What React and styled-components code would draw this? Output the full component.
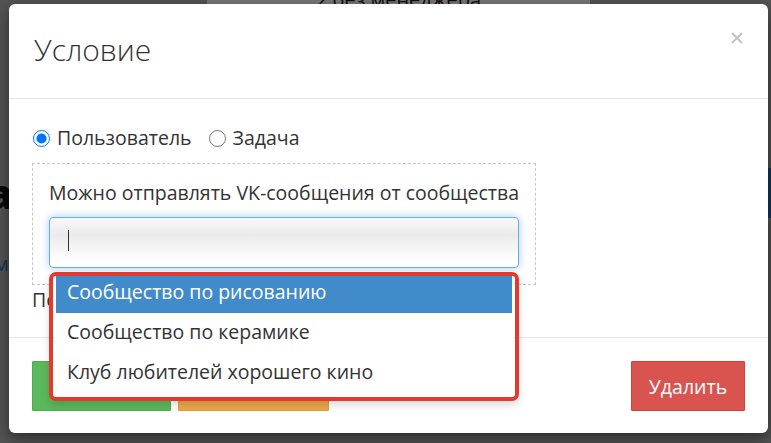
import React from "react";
import styled, { createGlobalStyle } from "styled-components";

const GlobalStyle = createGlobalStyle`
  html, body {
    margin: 0;
    padding: 0;
  }
  body {
    width: 771px;
    height: 443px;
    overflow: hidden;
    font-family: "Open Sans", "Liberation Sans", sans-serif;
    color: #333;
    background: #a8a8a8;
  }
`;

const Page = styled.div`
  position: relative;
  width: 771px;
  height: 443px;
  overflow: hidden;
`;

const PageContent = styled.div`
  display: grid;
  grid-template-columns: 207px 383px 1fr;
  align-items: start;
  height: 100%;
`;

const SideColumn = styled.div`
  position: relative;
  height: 100%;
`;

const CenterCard = styled.div`
  background: #f2f2f2;
  text-align: center;
  font-size: 20px;
  line-height: 20px;
  height: 60px;
  margin-top: -10px;
  color: #222;
`;

const BigLetter = styled.span`
  position: absolute;
  left: -12px;
  top: 166px;
  font-size: 40px;
  font-weight: 800;
  color: #111;
`;

const SmallLink = styled.span`
  position: absolute;
  left: -6px;
  top: 250px;
  font-size: 20px;
  color: #2a6ab0;
`;

const NavyBlock = styled.div`
  position: absolute;
  right: 0;
  top: 168px;
  width: 40px;
  height: 50px;
  background: #2f6fb5;
`;

const Backdrop = styled.div`
  position: absolute;
  inset: 0;
  background: rgba(0, 0, 0, 0.5);
`;

const Modal = styled.div`
  position: absolute;
  left: 9px;
  top: 4px;
  width: 759px;
  background: #fff;
  border-radius: 6px;
  box-shadow: 0 5px 15px rgba(0, 0, 0, 0.5);
  display: flex;
  flex-direction: column;
`;

const Header = styled.div`
  flex-shrink: 0;
  height: 94px;
  padding: 0 25px 0 25px;
  border-bottom: 1px solid #e5e5e5;
  display: flex;
  justify-content: space-between;
  align-items: center;
`;

const Title = styled.h4`
  margin: -4px 0 0;
  font-weight: 300;
  font-size: 30px;
  color: #333;
`;

const Close = styled.button`
  align-self: flex-start;
  margin-top: 28px;
  padding: 0;
  border: 0;
  background: none;
  width: 12px;
  height: 12px;
  display: flex;
`;

const Body = styled.div`
  padding: 26px 23px 24px;
  font-size: 19.5px;
  line-height: 26px;
`;

const RadioRow = styled.div`
  display: flex;
  align-items: center;
  height: 26px;
  margin-bottom: 12px;
`;

const RadioLabel = styled.label`
  display: flex;
  align-items: center;
  gap: 7px;
  margin-right: 16px;
  color: #333;
`;

const Radio = styled.input`
  width: 17px;
  height: 17px;
  margin: 0 0 0 1px;
`;

const DashedBox = styled.div`
  border: 1px dashed #c8c8c8;
  padding: 16px;
  width: 470px;
`;

const FieldLabel = styled.div`
  margin-bottom: 11px;
  white-space: nowrap;
`;

const SelectWrap = styled.div`
  position: relative;
`;

const SelectInput = styled.div`
  height: 49px;
  border: 1px solid #66afe9;
  border-radius: 4px;
  background: linear-gradient(#f8f8f8 0%, #ebebeb 35%, #fff 90%);
  box-shadow: 0 0 8px rgba(102, 175, 233, 0.6);
  display: flex;
  align-items: center;
  padding-left: 18px;
`;

const Caret = styled.span`
  width: 1px;
  height: 21px;
  background: #333;
  margin-top: -4px;
`;

const Dropdown = styled.div`
  position: absolute;
  left: 0;
  top: 55px;
  width: 470px;
  box-sizing: border-box;
  border: 4px solid #e23a2e;
  border-radius: 7px;
  background: #fff;
  padding: 0 3px 4px;
  overflow: hidden;
  box-shadow: 0 4px 8px rgba(0, 0, 0, 0.15);
  z-index: 2;
`;

const OptionList = styled.ul`
  list-style: none;
  margin: -3px 0 0;
  padding: 0;
`;

const Option = styled.li`
  height: 40px;
  line-height: 38px;
  padding-left: 11px;
  white-space: nowrap;
  color: ${(p) => (p.$active ? "#fff" : "#333")};
  background: ${(p) => (p.$active ? "#428bca" : "transparent")};
`;

const Hint = styled.div`
  margin-top: 2px;
  white-space: nowrap;
`;

const Footer = styled.div`
  border-top: 1px solid #e5e5e5;
  padding: 23px 23px 22px;
  display: flex;
  gap: 7px;
`;

const Button = styled.button`
  height: 50px;
  width: ${(p) => p.$w}px;
  border: 1px solid ${(p) => p.$border};
  background: ${(p) => p.$bg};
  color: #fff;
  font-family: inherit;
  font-size: 19.5px;
  border-radius: 1px;
  padding: 0;
  margin-left: ${(p) => (p.$push ? "auto" : "0")};
`;

const options = [
  "Сообщество по рисованию",
  "Сообщество по керамике",
  "Клуб любителей хорошего кино",
];

export default function App() {
  return (
    <Page>
      <GlobalStyle />
      <PageContent>
        <SideColumn>
          <BigLetter>a</BigLetter>
          <SmallLink>м</SmallLink>
        </SideColumn>
        <CenterCard>2 без менеджера</CenterCard>
        <SideColumn>
          <NavyBlock />
        </SideColumn>
      </PageContent>
      <Backdrop />
      <Modal>
        <Header>
          <Title>Условие</Title>
          <Close aria-label="Закрыть">
            <svg width="12" height="12" viewBox="0 0 12 12">
              <path d="M1 1 L11 11 M11 1 L1 11" stroke="#c4c4c4" strokeWidth="2" />
            </svg>
          </Close>
        </Header>
        <Body>
          <RadioRow>
            <RadioLabel>
              <Radio type="radio" name="kind" defaultChecked />
              Пользователь
            </RadioLabel>
            <RadioLabel>
              <Radio type="radio" name="kind" />
              Задача
            </RadioLabel>
          </RadioRow>
          <DashedBox>
            <FieldLabel>Можно отправлять VK-сообщения от сообщества</FieldLabel>
            <SelectWrap>
              <SelectInput>
                <Caret />
              </SelectInput>
              <Dropdown>
                <OptionList>
                  {options.map((o, i) => (
                    <Option key={o} $active={i === 0}>
                      {o}
                    </Option>
                  ))}
                </OptionList>
              </Dropdown>
            </SelectWrap>
          </DashedBox>
          <Hint>Подписан на сообщество</Hint>
        </Body>
        <Footer>
          <Button $w={139} $bg="#5cb85c" $border="#4cae4c">Сохранить</Button>
          <Button $w={151} $bg="#eaa84c" $border="#e59d35">Отмена</Button>
          <Button $w={114} $bg="#d9534f" $border="#d43f3a" $push>Удалить</Button>
        </Footer>
      </Modal>
    </Page>
  );
}
